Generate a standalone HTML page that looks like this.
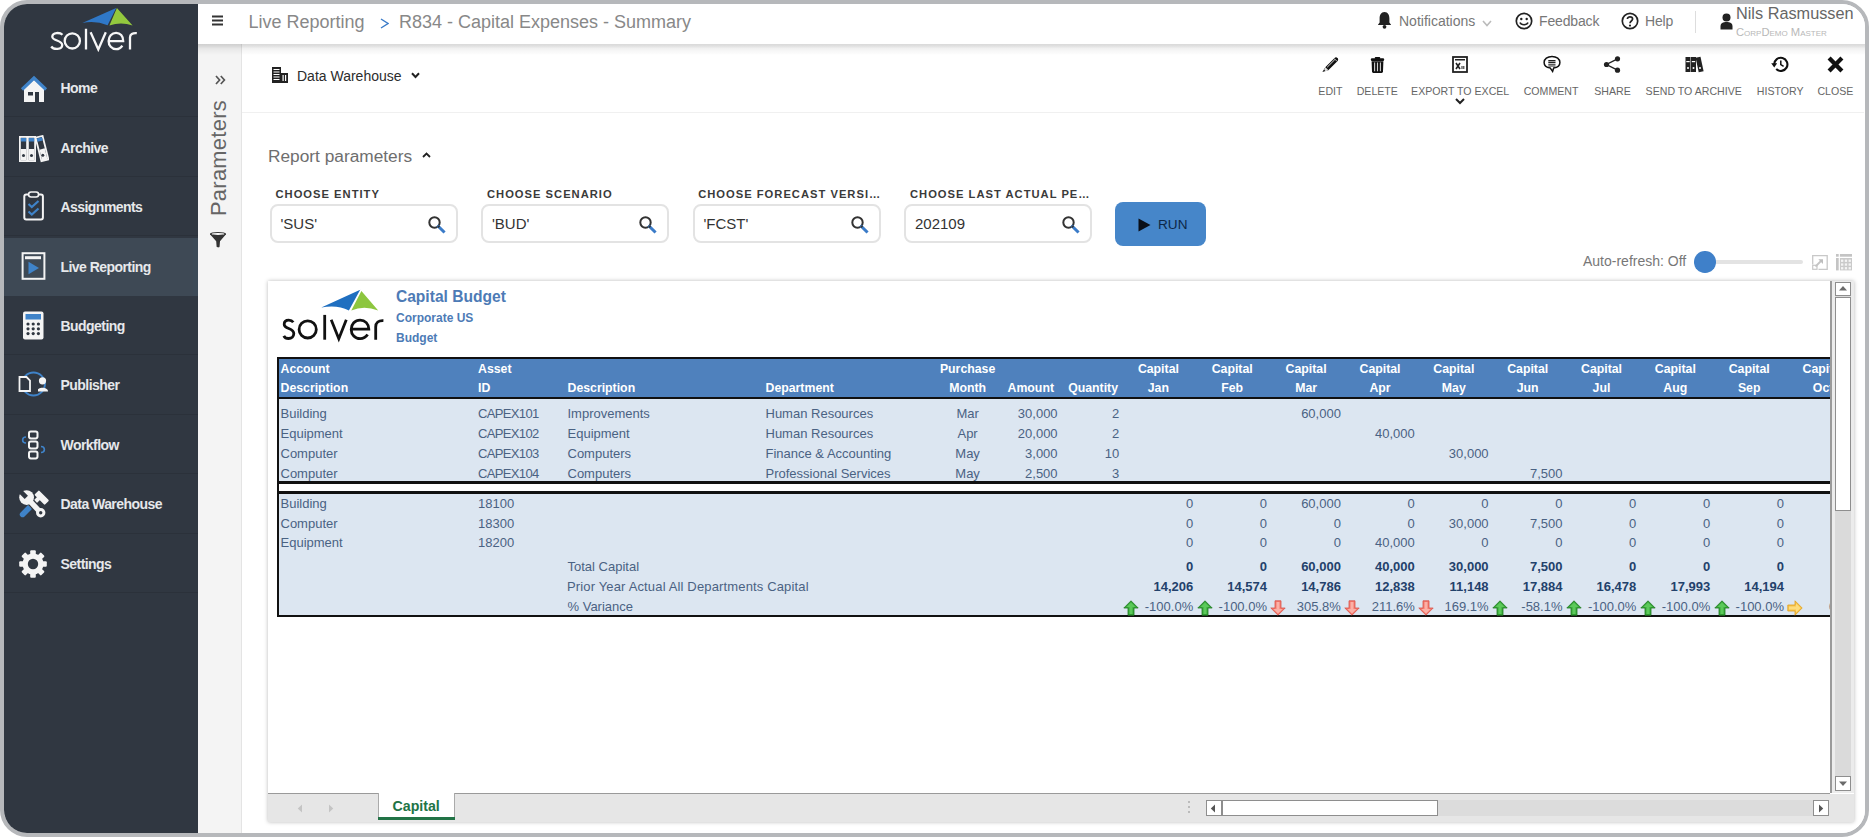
<!DOCTYPE html>
<html><head><meta charset="utf-8">
<style>
html,body{margin:0;padding:0;background:#fff;width:1869px;height:837px;overflow:hidden;font-family:"Liberation Sans",sans-serif;}
#frame{position:absolute;left:0;top:0;width:1869px;height:837px;box-sizing:border-box;border:4px solid #b6b8bb;border-radius:27px;overflow:hidden;background:#fff;}
#pg{position:absolute;left:-4px;top:-4px;width:1869px;height:837px;}
.a{position:absolute;white-space:nowrap;}
/* sidebar */
#sb{position:absolute;left:0;top:0;width:198px;height:837px;background:#303741;}
.item{position:absolute;left:0;width:198px;height:58.5px;border-bottom:1px solid #2b313a;}
.item .t{position:absolute;left:60.5px;top:21.7px;font-size:14px;font-weight:bold;color:#e6e8eb;letter-spacing:-0.55px;}
.item svg{position:absolute;left:17px;top:14px;}
#top{position:absolute;left:198px;top:0;width:1671px;height:44px;background:#fff;z-index:3;}
#tshadow{position:absolute;left:198px;top:44px;width:1671px;height:11px;z-index:4;background:linear-gradient(rgba(0,0,0,0.15),rgba(0,0,0,0.12) 18%,rgba(0,0,0,0.06) 40%,rgba(0,0,0,0.035) 60%,rgba(0,0,0,0.015) 85%,rgba(0,0,0,0));}
#par{position:absolute;left:198px;top:44px;width:43px;height:800px;background:#f4f4f4;border-right:1px solid #e4e4e4;}
#main{position:absolute;left:242px;top:44px;width:1627px;height:800px;background:#fff;}
.tb{position:absolute;top:85px;font-size:10.6px;color:#666;text-align:center;width:120px;margin-left:-60px;}
.lbl{position:absolute;top:188px;font-size:11.2px;font-weight:bold;color:#3a3a3a;letter-spacing:1px;}
.inp{position:absolute;top:204px;width:188px;height:39px;box-sizing:border-box;border:2px solid #e3e3e3;border-radius:8px;background:#fff;}
.inp .v{position:absolute;left:9px;top:8.6px;font-size:15px;color:#333;}
.inp svg{position:absolute;left:155px;top:9px;}
</style></head><body>
<div id="frame"><div id="pg">

<!-- SIDEBAR -->
<div id="sb">
  <svg class="a" style="left:40px;top:0px" width="110" height="60" viewBox="40 0 110 60">
    <path d="M82.3 22.9 L116.2 7.9 L107.6 25.2 Q96 20.5 82.3 22.9 Z" fill="#2f78c8"/>
    <path d="M116.9 7.9 L132.6 25.4 Q121 21.5 109.4 25.4 Z" fill="#93c83e"/>
    <g fill="none" stroke="#f6f6f6" stroke-width="2.3">
      <path d="M62.5 34.8 C60 32.3 52.5 32 52.3 36.6 C52.2 41.2 62.2 39.8 62.2 45 C62.2 50 53.5 49.8 51.2 46.5"/>
      <circle cx="72.3" cy="40.9" r="7.6"/>
      <line x1="86" y1="28.8" x2="86" y2="49.6"/>
      <path d="M90.6 32.3 L98.3 49.4 L105.8 32.3"/>
      <path d="M109.2 41.2 L123.2 41.2 C123.4 36 120 32.8 116.1 32.8 C111.8 32.8 108.6 36.5 108.6 41 C108.6 45.5 111.8 49.2 116.1 49.2 C119 49.2 121 47.8 122.3 45.6"/>
      <path d="M130 49.6 L130 37.5 C130 34.5 132.5 32.8 136.8 33.2"/>
    </g>
  </svg>
  <div class="item" style="top:57.9px;"><div class="t">Home</div></div>
  <div class="a" style="left:18.5px;top:75px;line-height:0"><svg width="30" height="30" viewBox="0 0 30 30"><path d="M5 14 L15 4.5 L25 14 L25 27 L5 27 Z" fill="#f4f4f4"/><path d="M3 14.5 L15 3 L27 14.5" fill="none" stroke="#3f83c9" stroke-width="3.2" stroke-linejoin="miter"/><rect x="9" y="17" width="5" height="3.5" fill="#303741"/><rect x="16" y="17" width="4" height="10" fill="#303741"/></svg></div>
  <div class="item" style="top:117.4px;"><div class="t" style="top:22.5px">Archive</div></div>
  <div class="a" style="left:17.3px;top:135.3px;line-height:0"><svg width="32" height="30" viewBox="0 0 32 30"><g stroke="#f4f4f4" stroke-width="1.8"><rect x="2.9" y="1.9" width="7.2" height="24.2" fill="#303741"/><rect x="10.9" y="1.9" width="7.2" height="24.2" fill="#303741"/><rect x="21.5" y="1.5" width="7.2" height="24.2" fill="#303741" transform="rotate(-14 25 14)"/></g><rect x="3.8" y="14" width="5.4" height="11.4" fill="#f4f4f4"/><rect x="11.8" y="14" width="5.4" height="11.4" fill="#f4f4f4"/><rect x="22.4" y="14" width="5.4" height="11.4" fill="#f4f4f4" transform="rotate(-14 25 14)"/><rect x="3.8" y="3" width="5.4" height="3.5" fill="#3f83c9"/><rect x="11.8" y="3" width="5.4" height="3.5" fill="#3f83c9"/><rect x="22.4" y="2.5" width="5.4" height="3.5" fill="#3f83c9" transform="rotate(-14 25 14)"/><circle cx="6.5" cy="20.5" r="1.5" fill="#303741"/><circle cx="14.5" cy="20.5" r="1.5" fill="#303741"/><circle cx="25.8" cy="20.2" r="1.5" fill="#303741"/></svg></div>
  <div class="item" style="top:176.9px;"><div class="t">Assignments</div></div>
  <div class="a" style="left:16.5px;top:189.5px;line-height:0"><svg width="30" height="32" viewBox="0 0 30 32"><rect x="7.3" y="4.5" width="18.6" height="25" rx="2" fill="none" stroke="#f4f4f4" stroke-width="2"/><rect x="11.6" y="2" width="10" height="5" rx="2.5" fill="#303741" stroke="#f4f4f4" stroke-width="1.6"/><path d="M11.5 14 L14.8 17 L21.5 11 M11.5 21.5 L14.8 24.5 L21.5 18.5" fill="none" stroke="#3f83c9" stroke-width="2.2"/></svg></div>
  <div class="a" style="left:0;top:238px;width:193px;height:58px;background:#3e4955;"></div><div class="a" style="left:193px;top:238px;width:5px;height:58px;background:#3d4a57;"></div><div class="item" style="top:236.4px;border-bottom:none;"><div class="t" style="top:23px">Live Reporting</div></div>
  <div class="a" style="left:17px;top:251px;line-height:0"><svg width="30" height="30" viewBox="0 0 30 30"><rect x="5.6" y="2.2" width="21.8" height="25.6" fill="none" stroke="#f4f4f4" stroke-width="2"/><rect x="8" y="5.2" width="16" height="3" fill="#f4f4f4"/><path d="M11.5 10.8 L22 17 L11.5 23.2 Z" fill="#3f83c9"/></svg></div>
  <div class="item" style="top:295.9px;"><div class="t">Budgeting</div></div>
  <div class="a" style="left:16px;top:309px;line-height:0"><svg width="30" height="32" viewBox="0 0 30 32"><rect x="7" y="2.5" width="20.5" height="28" rx="2" fill="#f4f4f4"/><rect x="9.5" y="5" width="15.5" height="5.5" fill="#3f83c9"/><g fill="#303741"><circle cx="12" cy="15" r="1.6"/><circle cx="17.2" cy="15" r="1.6"/><circle cx="22.4" cy="15" r="1.6"/><circle cx="12" cy="19.8" r="1.6"/><circle cx="17.2" cy="19.8" r="1.6"/><circle cx="22.4" cy="19.8" r="1.6"/><circle cx="12" cy="24.6" r="1.6"/><circle cx="17.2" cy="24.6" r="1.6"/><circle cx="22.4" cy="24.6" r="1.6"/></g></svg></div>
  <div class="item" style="top:355.4px;"><div class="t">Publisher</div></div>
  <div class="a" style="left:17px;top:368px;line-height:0"><svg width="34" height="32" viewBox="0 0 34 32"><circle cx="16.5" cy="16" r="11.5" fill="none" stroke="#3f83c9" stroke-width="1.8"/><path d="M2.5 9 L9.5 9 L13 12.5 L13 23 L2.5 23 Z" fill="#303741" stroke="#f4f4f4" stroke-width="1.8"/><circle cx="25.5" cy="12.8" r="3.6" fill="#f4f4f4"/><path d="M20 23.5 C20 18.5 31 18.5 31 23.5 Z" fill="#f4f4f4"/><rect x="18" y="16.5" width="3" height="8" fill="#303741"/></svg></div>
  <div class="item" style="top:414.9px;"><div class="t">Workflow</div></div>
  <div class="a" style="left:17.3px;top:429.3px;line-height:0"><svg width="34" height="32" viewBox="0 0 34 32"><g fill="none" stroke="#f4f4f4" stroke-width="2"><rect x="12" y="2.4" width="8.5" height="7" rx="1.8"/><rect x="12" y="12.4" width="8.5" height="7" rx="1.8"/><rect x="12" y="22.4" width="8.5" height="7" rx="1.8"/></g><g fill="none" stroke="#3f83c9" stroke-width="1.6"><path d="M9 8 C4.5 8 4.5 14 9 14"/><path d="M24 17.5 C28.5 17.5 28.5 23.5 24 23.5"/></g></svg></div>
  <div class="item" style="top:474.4px;"><div class="t">Data Warehouse</div></div>
  <div class="a" style="left:14px;top:486px;line-height:0"><svg width="38" height="36" viewBox="0 0 38 36"><line x1="8.6" y1="28.4" x2="16.5" y2="20.5" stroke="#3f83c9" stroke-width="5.6" stroke-linecap="round"/><line x1="16" y1="21" x2="26" y2="11" stroke="#f4f4f4" stroke-width="4"/><rect x="20.5" y="8.4" width="14.5" height="6.4" rx="1" transform="rotate(45 27.7 11.6)" fill="#f4f4f4"/><line x1="13" y1="12" x2="26.5" y2="26.5" stroke="#303741" stroke-width="8"/><line x1="13" y1="12" x2="26.5" y2="26.5" stroke="#f4f4f4" stroke-width="5.4" stroke-linecap="round"/><circle cx="26.7" cy="26.7" r="4.7" fill="#f4f4f4"/><circle cx="26.7" cy="26.7" r="1.7" fill="#303741"/><circle cx="12.6" cy="11.6" r="7.4" fill="#f4f4f4"/><rect x="10.3" y="1" width="4.6" height="10.2" transform="rotate(-45 12.6 11.6)" fill="#303741"/></svg></div>
  <div class="item" style="top:533.9px;"><div class="t">Settings</div></div>
  <div class="a" style="left:17.3px;top:547.5px;line-height:0"><svg width="32" height="32" viewBox="0 0 32 32"><g transform="translate(16 16)" fill="#f4f4f4"><circle r="10.5"/><g id="teeth"><rect x="-2.8" y="-13.8" width="5.6" height="6" rx="1"/><rect x="-2.8" y="-13.8" width="5.6" height="6" rx="1" transform="rotate(45)"/><rect x="-2.8" y="-13.8" width="5.6" height="6" rx="1" transform="rotate(90)"/><rect x="-2.8" y="-13.8" width="5.6" height="6" rx="1" transform="rotate(135)"/><rect x="-2.8" y="-13.8" width="5.6" height="6" rx="1" transform="rotate(180)"/><rect x="-2.8" y="-13.8" width="5.6" height="6" rx="1" transform="rotate(225)"/><rect x="-2.8" y="-13.8" width="5.6" height="6" rx="1" transform="rotate(270)"/><rect x="-2.8" y="-13.8" width="5.6" height="6" rx="1" transform="rotate(315)"/></g><circle r="5.2" fill="#303741"/></g></svg></div>
</div>

<!-- TOP BAR -->
<div id="top">
  <svg class="a" style="left:14px;top:15px" width="11" height="11" viewBox="0 0 11 11"><g stroke="#333" stroke-width="1.8"><line x1="0" y1="1.5" x2="11" y2="1.5"/><line x1="0" y1="5.5" x2="11" y2="5.5"/><line x1="0" y1="9.5" x2="11" y2="9.5"/></g></svg>
  <div class="a" style="left:50.5px;top:12px;font-size:18px;color:#888;">Live Reporting</div>
  <svg class="a" style="left:182px;top:18px" width="9" height="11" viewBox="0 0 9 11"><path d="M1 1 L8 5.5 L1 10" fill="none" stroke="#3a7bc8" stroke-width="1.4"/></svg>
  <div class="a" style="left:201px;top:12px;font-size:18px;color:#888;">R834 - Capital Expenses - Summary</div>
  <!-- right -->
  <svg class="a" style="left:1179px;top:11px" width="15" height="18" viewBox="0 0 15 18"><path d="M7.5 1 C4 1 2.6 4 2.6 7.5 L2.6 11.5 L0.8 14 L14.2 14 L12.4 11.5 L12.4 7.5 C12.4 4 11 1 7.5 1 Z" fill="#222"/><circle cx="7.5" cy="15.8" r="1.9" fill="#222"/></svg>
  <div class="a" style="left:1201px;top:13px;font-size:14px;color:#777;">Notifications</div>
  <svg class="a" style="left:1284px;top:20px" width="10" height="7" viewBox="0 0 10 7"><path d="M1 1 L5 5.5 L9 1" fill="none" stroke="#bbb" stroke-width="1.6"/></svg>
  <svg class="a" style="left:1317px;top:12px" width="18" height="18" viewBox="0 0 18 18"><circle cx="9" cy="9" r="7.7" fill="none" stroke="#222" stroke-width="1.7"/><circle cx="6.3" cy="7" r="1.2" fill="#222"/><circle cx="11.7" cy="7" r="1.2" fill="#222"/><path d="M5 10.5 C6.2 13.5 11.8 13.5 13 10.5" fill="none" stroke="#222" stroke-width="1.6"/></svg>
  <div class="a" style="left:1341px;top:13px;font-size:14px;color:#777;letter-spacing:-0.15px;">Feedback</div>
  <svg class="a" style="left:1423px;top:12px" width="18" height="18" viewBox="0 0 18 18"><circle cx="9" cy="9" r="7.7" fill="none" stroke="#222" stroke-width="1.7"/><path d="M6.4 7 C6.4 4.2 11.6 4.2 11.6 7 C11.6 9 9 9 9 11.2" fill="none" stroke="#222" stroke-width="1.7"/><circle cx="9" cy="13.6" r="1.1" fill="#222"/></svg>
  <div class="a" style="left:1447px;top:13px;font-size:14px;color:#777;letter-spacing:-0.2px;">Help</div>
  <div class="a" style="left:1497px;top:11px;width:1px;height:22px;background:#ddd;"></div>
  <svg class="a" style="left:1522px;top:13px" width="13" height="17" viewBox="0 0 13 17"><circle cx="6.5" cy="4.6" r="4" fill="#222"/><path d="M0.5 16.5 L0.5 13.5 C0.5 10 3 9 6.5 9 C10 9 12.5 10 12.5 13.5 L12.5 16.5 Z" fill="#222"/></svg>
  <div class="a" style="left:1538px;top:4px;font-size:16.3px;color:#666;">Nils Rasmussen</div>
  <div class="a" style="left:1538px;top:26px;font-size:11.2px;color:#b8b8b8;font-variant:small-caps;letter-spacing:0px;">CorpDemo Master</div>
</div>

<div id="tshadow"></div>
<!-- PARAMETERS STRIP -->
<div id="par">
  <svg class="a" style="left:17px;top:30.5px" width="11" height="11" viewBox="0 0 11 11"><path d="M1 1 L4.6 5 L1 9 M5.8 1 L9.4 5 L5.8 9" fill="none" stroke="#555" stroke-width="1.7"/></svg>
  <div class="a" style="left:8.5px;top:171.5px;font-size:21.8px;color:#666;transform-origin:0 0;transform:rotate(-90deg);letter-spacing:0.33px;line-height:24px;">Parameters</div>
  <svg class="a" style="left:11px;top:187px" width="18" height="18" viewBox="0 0 18 18"><path d="M0.8 3 L17.2 3 L11 10.2 L10.6 15.6 C10.4 16.8 7.8 16.8 7.6 15.6 L7.2 10.2 Z" fill="#333"/><ellipse cx="9" cy="3" rx="8.2" ry="2" fill="#333"/><ellipse cx="9" cy="2.9" rx="6.4" ry="1" fill="#fafafa"/></svg>
</div>

<!-- MAIN -->
<div id="main"></div>
<div class="a" style="left:242px;top:112px;width:1622px;height:1px;background:#f0f0f0;"></div>
<!-- data warehouse dropdown -->
<svg class="a" style="left:272px;top:67px" width="16" height="16" viewBox="0 0 16 16"><g fill="#222"><rect x="0" y="0" width="9" height="16"/><rect x="9" y="6" width="7" height="10"/></g><g fill="#fff"><rect x="1.5" y="2" width="6" height="1"/><rect x="1.5" y="4.5" width="6" height="1"/><rect x="1.5" y="7" width="6" height="1"/><rect x="1.5" y="9.5" width="6" height="1"/><rect x="1.5" y="12" width="6" height="1"/><rect x="10.5" y="8" width="1.2" height="6"/><rect x="13" y="8" width="1.2" height="6"/></g></svg>
<div class="a" style="left:297px;top:67.5px;font-size:14px;color:#2c2c2c;">Data Warehouse</div>
<svg class="a" style="left:411px;top:72px" width="9" height="7" viewBox="0 0 9 7"><path d="M1 1.2 L4.5 5 L8 1.2" fill="none" stroke="#222" stroke-width="2"/></svg>

<!-- toolbar -->
<div class="tb" style="left:1330.4px">EDIT</div>
<div class="tb" style="left:1377.3px">DELETE</div>
<div class="tb" style="left:1460.2px">EXPORT TO EXCEL</div>
<div class="tb" style="left:1551.1px">COMMENT</div>
<div class="tb" style="left:1612.5px">SHARE</div>
<div class="tb" style="left:1693.7px">SEND TO ARCHIVE</div>
<div class="tb" style="left:1780.2px">HISTORY</div>
<div class="tb" style="left:1835.4px">CLOSE</div>
<!-- pencil -->
<svg class="a" style="left:1320px;top:55px" width="20" height="19" viewBox="0 0 20 19"><path d="M5.3 12.2 L14.6 2.9 C15.4 2.1 16.6 2.1 17.4 2.9 L17.6 3.1 C18.4 3.9 18.4 5.1 17.6 5.9 L8.3 15.2 Z" fill="#111"/><path d="M5.3 12.2 L8.3 15.2 L2.4 17 Z" fill="#111"/><path d="M4.2 14.8 L5.3 12.2 L8.3 15.2 L5.7 16.2 Z" fill="#ddd"/><path d="M7.2 12.2 L14.8 4.6" stroke="#eee" stroke-width="0.9"/><path d="M14.3 3.6 L17 6.3" stroke="#eee" stroke-width="0.8"/></svg>
<!-- trash -->
<svg class="a" style="left:1370px;top:56px" width="15" height="18" viewBox="0 0 15 18"><rect x="0.8" y="2.3" width="13.4" height="2.6" rx="1.2" fill="#111"/><rect x="4.8" y="1" width="5.4" height="2" rx="0.8" fill="#111"/><path d="M1.6 5.2 L13.4 5.2 L13 15.6 C13 16.4 12.4 16.9 11.6 16.9 L3.4 16.9 C2.6 16.9 2 16.4 2 15.6 Z" fill="#111"/><g stroke="#cfcfcf" stroke-width="1.1"><line x1="4.6" y1="6.6" x2="4.6" y2="15.2"/><line x1="7.5" y1="6.6" x2="7.5" y2="15.2"/><line x1="10.4" y1="6.6" x2="10.4" y2="15.2"/></g></svg>
<!-- excel -->
<svg class="a" style="left:1452px;top:56px" width="16" height="17" viewBox="0 0 16 17"><rect x="1" y="1" width="14" height="15" fill="none" stroke="#222" stroke-width="1.8"/><rect x="3" y="3" width="10" height="1.5" fill="#222"/><path d="M4 7 L8 13 M8 7 L4 13" stroke="#222" stroke-width="1.6"/><rect x="9.5" y="10" width="1" height="3" fill="#222"/><rect x="11.3" y="10" width="1" height="3" fill="#222"/></svg>
<svg class="a" style="left:1455px;top:98px" width="10" height="7" viewBox="0 0 10 7"><path d="M1 1 L5 5 L9 1" fill="none" stroke="#222" stroke-width="2"/></svg>
<!-- comment -->
<svg class="a" style="left:1542px;top:55px" width="20" height="18" viewBox="0 0 20 18"><path d="M10 1.4 C5.4 1.4 2.1 4.1 2.1 7.4 C2.1 10.3 4.6 12.5 8.3 13.1 L10.6 16.4 L11.7 13 C15.4 12.4 17.9 10.2 17.9 7.4 C17.9 4.1 14.6 1.4 10 1.4 Z" fill="none" stroke="#111" stroke-width="1.5"/><g stroke="#222" stroke-width="1.15"><line x1="6.3" y1="5.6" x2="13.5" y2="5.6"/><line x1="6.3" y1="7.4" x2="13.5" y2="7.4"/><line x1="6.3" y1="9.2" x2="13.5" y2="9.2"/><line x1="6.3" y1="11" x2="13.5" y2="11"/></g></svg>
<!-- share -->
<svg class="a" style="left:1603px;top:56px" width="18" height="17" viewBox="0 0 18 17"><g fill="#222"><circle cx="14.5" cy="2.8" r="2.6"/><circle cx="3.5" cy="8.5" r="2.6"/><circle cx="14.5" cy="14.2" r="2.6"/></g><path d="M14.5 2.8 L3.5 8.5 L14.5 14.2" fill="none" stroke="#222" stroke-width="1.4"/></svg>
<!-- archive -->
<svg class="a" style="left:1685px;top:56px" width="19" height="17" viewBox="0 0 19 17"><g fill="#222"><rect x="0.5" y="1" width="5" height="15"/><rect x="6" y="1" width="5" height="15"/><rect x="12" y="1" width="5" height="15" transform="rotate(-12 14.5 8)"/></g><g fill="#fff"><rect x="1.3" y="5" width="3.4" height="1.2"/><rect x="6.8" y="5" width="3.4" height="1.2"/><circle cx="3" cy="12" r="1"/><circle cx="8.5" cy="12" r="1"/><circle cx="15" cy="12" r="1"/></g></svg>
<!-- history -->
<svg class="a" style="left:1771px;top:56px" width="20" height="17" viewBox="0 0 20 17"><path d="M3.2 8.3 A6.6 6.6 0 1 1 5.2 13.1" fill="none" stroke="#111" stroke-width="2.1"/><path d="M0.2 7.2 L6.2 7.2 L3.2 11.4 Z" fill="#111"/><path d="M9.8 4.6 L9.8 8.6 L12.6 10.4" fill="none" stroke="#111" stroke-width="1.5"/></svg>
<!-- close -->
<svg class="a" style="left:1827px;top:56px" width="17" height="17" viewBox="0 0 17 17"><path d="M3.6 3.6 L13.4 13.4 M13.4 3.6 L3.6 13.4" stroke="#111" stroke-width="4.3" stroke-linecap="square"/></svg>

<!-- report parameters -->
<div class="a" style="left:268px;top:146px;font-size:17.3px;color:#6e6e6e;">Report parameters</div>
<svg class="a" style="left:422px;top:152px" width="9" height="6" viewBox="0 0 9 6"><path d="M1 5 L4.5 1.5 L8 5" fill="none" stroke="#222" stroke-width="1.8"/></svg>

<div class="lbl" style="left:275.5px">CHOOSE ENTITY</div>
<div class="lbl" style="left:487px">CHOOSE SCENARIO</div>
<div class="lbl" style="left:698.2px">CHOOSE FORECAST VERSI&#8230;</div>
<div class="lbl" style="left:910px">CHOOSE LAST ACTUAL PE&#8230;</div>
<div class="inp" style="left:269.5px"><div class="v">&#39;SUS&#39;</div><svg width="20" height="20" viewBox="0 0 20 20"><circle cx="7.5" cy="7.5" r="5.2" fill="none" stroke="#333" stroke-width="2"/><path d="M11.5 11.5 L16.5 16.5" stroke="#3a7bc8" stroke-width="3" stroke-linecap="square"/><path d="M11 11 L12.3 12.3" stroke="#333" stroke-width="2.2"/></svg></div>
<div class="inp" style="left:481px"><div class="v">&#39;BUD&#39;</div><svg width="20" height="20" viewBox="0 0 20 20"><circle cx="7.5" cy="7.5" r="5.2" fill="none" stroke="#333" stroke-width="2"/><path d="M11.5 11.5 L16.5 16.5" stroke="#3a7bc8" stroke-width="3" stroke-linecap="square"/><path d="M11 11 L12.3 12.3" stroke="#333" stroke-width="2.2"/></svg></div>
<div class="inp" style="left:692.5px"><div class="v">&#39;FCST&#39;</div><svg width="20" height="20" viewBox="0 0 20 20"><circle cx="7.5" cy="7.5" r="5.2" fill="none" stroke="#333" stroke-width="2"/><path d="M11.5 11.5 L16.5 16.5" stroke="#3a7bc8" stroke-width="3" stroke-linecap="square"/><path d="M11 11 L12.3 12.3" stroke="#333" stroke-width="2.2"/></svg></div>
<div class="inp" style="left:904px"><div class="v">202109</div><svg width="20" height="20" viewBox="0 0 20 20"><circle cx="7.5" cy="7.5" r="5.2" fill="none" stroke="#333" stroke-width="2"/><path d="M11.5 11.5 L16.5 16.5" stroke="#3a7bc8" stroke-width="3" stroke-linecap="square"/><path d="M11 11 L12.3 12.3" stroke="#333" stroke-width="2.2"/></svg></div>

<!-- run -->
<div class="a" style="left:1115px;top:202px;width:91px;height:44px;background:#4686c9;border-radius:8px;"></div>
<svg class="a" style="left:1138px;top:218px" width="13" height="14" viewBox="0 0 13 14"><path d="M0.5 0.5 L12.5 7 L0.5 13.5 Z" fill="#0a0f18"/></svg>
<div class="a" style="left:1158px;top:216.5px;font-size:13.6px;color:#0d2848;">RUN</div>

<!-- auto refresh -->
<div class="a" style="left:1583px;top:253px;font-size:14px;color:#777;">Auto-refresh: Off</div>
<div class="a" style="left:1712px;top:260px;width:91px;height:4px;background:#e3e3e3;border-radius:2px;"></div>
<div class="a" style="left:1694px;top:251px;width:21.5px;height:21.5px;background:#3f80c9;border-radius:50%;"></div>
<svg class="a" style="left:1812px;top:255px" width="16" height="15" viewBox="0 0 16 15"><path d="M0.7 9.5 L0.7 0.7 L15.2 0.7 L15.2 14.3 L6.5 14.3" fill="none" stroke="#c8c8c8" stroke-width="1.3"/><rect x="0.7" y="10.3" width="4.3" height="4" fill="none" stroke="#c8c8c8" stroke-width="1.2"/><path d="M3.5 11.5 L9 6" stroke="#c4c4c4" stroke-width="1.8"/><path d="M6.3 4.3 L11 4.3 L11 9 Z" fill="#bdbdbd"/></svg>
<svg class="a" style="left:1836px;top:254px" width="16" height="17" viewBox="0 0 16 17"><g fill="#c4c4c4"><rect x="0" y="0" width="2.7" height="2.7"/><rect x="3.9" y="0" width="12.1" height="2.7"/><rect x="0" y="4" width="2.7" height="12.4"/><rect x="3.9" y="4" width="12.1" height="12.4" fill="#cacaca"/></g><g fill="#f4f4f4"><rect x="5" y="5.6" width="2.3" height="2.3"/><rect x="8.8" y="5.6" width="2.3" height="2.3"/><rect x="12.6" y="5.6" width="2.3" height="2.3"/><rect x="5" y="9.4" width="2.3" height="2.3"/><rect x="8.8" y="9.4" width="2.3" height="2.3"/><rect x="12.6" y="9.4" width="2.3" height="2.3"/><rect x="5" y="13.1" width="2.3" height="2.3"/><rect x="8.8" y="13.1" width="2.3" height="2.3"/><rect x="12.6" y="13.1" width="2.3" height="2.3"/></g></svg>

<!-- SHEET -->
<div class="a" style="left:268px;top:281px;width:1586px;height:541px;background:#fff;box-shadow:0 0 4px rgba(0,0,0,0.28);"></div>
<div class="a" style="left:268px;top:281px;width:1562px;height:512px;overflow:hidden;">
<div class="a" style="left:-268px;top:-281px;width:1869px;height:837px;">
<svg class="a" style="left:0;top:0" width="400" height="350" viewBox="0 0 400 350">
<path d="M321.3 307.6 L360.2 289.7 L348.9 310.4 Q337 304.5 321.3 307.6 Z" fill="#1f6fc0"/>
<path d="M361.4 291 L378.2 310.4 Q364 305 351.3 310.4 Z" fill="#8dc63f"/>
<g fill="none" stroke="#111" stroke-width="2.8">
<path d="M293.3 322.3 C292 320.5 290.5 320.1 288.8 320.1 C286 320.1 284.2 321.8 284.2 324.2 C284.2 329.5 293.8 327.5 293.8 333.6 C293.8 336.6 291.5 338.5 288.6 338.5 C286.3 338.5 284.5 337.3 283.8 335.8"/>
<circle cx="307.7" cy="329.4" r="8.6"/>
<line x1="324.7" y1="314.9" x2="324.7" y2="339.7"/>
<path d="M331.2 319.8 L338.8 338.7 L346.3 319.8"/>
<path d="M351.3 329.1 L368.8 329.1 C368.8 323.8 365 320.1 360.1 320.1 C355 320.1 351.2 324.2 351.2 329.4 C351.2 334.6 355 338.6 360.1 338.6 C363.5 338.6 366 337 367.6 334.5"/>
<path d="M375.7 339.7 L375.7 327 C375.7 322.5 378.5 320.3 383.4 320.6"/>
</g></svg>
<div class="a" style="left:395.9px;top:289.3px;font-size:15.6px;line-height:15.6px;font-weight:bold;color:#4d7bb6;">Capital Budget</div>
<div class="a" style="left:396.0px;top:311.6px;font-size:12px;line-height:12px;font-weight:bold;color:#4d7bb6;">Corporate US</div>
<div class="a" style="left:396.0px;top:331.7px;font-size:12px;line-height:12px;font-weight:bold;color:#4d7bb6;">Budget</div>
<div class="a" style="left:277px;top:357px;width:1623px;height:2px;background:#111;"></div>
<div class="a" style="left:277px;top:359px;width:1623px;height:38px;background:#4f81bd;"></div>
<div class="a" style="left:277px;top:397px;width:1623px;height:2px;background:#111;"></div>
<div class="a" style="left:277px;top:399px;width:1623px;height:82px;background:#dce6f1;"></div>
<div class="a" style="left:277px;top:481px;width:1623px;height:2.5px;background:#111;"></div>
<div class="a" style="left:277px;top:491px;width:1623px;height:2.5px;background:#111;"></div>
<div class="a" style="left:277px;top:493.5px;width:1623px;height:121px;background:#dce6f1;"></div>
<div class="a" style="left:277px;top:614.5px;width:1623px;height:2.5px;background:#111;"></div>
<div class="a" style="left:277px;top:357px;width:2px;height:260px;background:#111;"></div>
<div class="a" style="left:280.5px;top:362.7px;font-size:12.3px;line-height:12.3px;font-weight:bold;color:#ffffff;">Account</div>
<div class="a" style="left:280.5px;top:382.3px;font-size:12.3px;line-height:12.3px;font-weight:bold;color:#ffffff;">Description</div>
<div class="a" style="left:478.0px;top:362.7px;font-size:12.3px;line-height:12.3px;font-weight:bold;color:#ffffff;">Asset</div>
<div class="a" style="left:478.0px;top:382.3px;font-size:12.3px;line-height:12.3px;font-weight:bold;color:#ffffff;">ID</div>
<div class="a" style="left:567.5px;top:382.3px;font-size:12.3px;line-height:12.3px;font-weight:bold;color:#ffffff;">Description</div>
<div class="a" style="left:765.5px;top:382.3px;font-size:12.3px;line-height:12.3px;font-weight:bold;color:#ffffff;">Department</div>
<div class="a" style="left:767.6px;width:400px;text-align:center;top:362.7px;font-size:12.3px;line-height:12.3px;font-weight:bold;color:#ffffff;">Purchase</div>
<div class="a" style="left:767.6px;width:400px;text-align:center;top:382.3px;font-size:12.3px;line-height:12.3px;font-weight:bold;color:#ffffff;">Month</div>
<div class="a" style="left:654.0px;width:400px;text-align:right;top:382.3px;font-size:12.3px;line-height:12.3px;font-weight:bold;color:#ffffff;">Amount</div>
<div class="a" style="left:718.0px;width:400px;text-align:right;top:382.3px;font-size:12.3px;line-height:12.3px;font-weight:bold;color:#ffffff;">Quantity</div>
<div class="a" style="left:958.4px;width:400px;text-align:center;top:362.7px;font-size:12.3px;line-height:12.3px;font-weight:bold;color:#ffffff;">Capital</div>
<div class="a" style="left:958.4px;width:400px;text-align:center;top:382.3px;font-size:12.3px;line-height:12.3px;font-weight:bold;color:#ffffff;">Jan</div>
<div class="a" style="left:1032.2px;width:400px;text-align:center;top:362.7px;font-size:12.3px;line-height:12.3px;font-weight:bold;color:#ffffff;">Capital</div>
<div class="a" style="left:1032.2px;width:400px;text-align:center;top:382.3px;font-size:12.3px;line-height:12.3px;font-weight:bold;color:#ffffff;">Feb</div>
<div class="a" style="left:1106.1px;width:400px;text-align:center;top:362.7px;font-size:12.3px;line-height:12.3px;font-weight:bold;color:#ffffff;">Capital</div>
<div class="a" style="left:1106.1px;width:400px;text-align:center;top:382.3px;font-size:12.3px;line-height:12.3px;font-weight:bold;color:#ffffff;">Mar</div>
<div class="a" style="left:1180.0px;width:400px;text-align:center;top:362.7px;font-size:12.3px;line-height:12.3px;font-weight:bold;color:#ffffff;">Capital</div>
<div class="a" style="left:1180.0px;width:400px;text-align:center;top:382.3px;font-size:12.3px;line-height:12.3px;font-weight:bold;color:#ffffff;">Apr</div>
<div class="a" style="left:1253.8px;width:400px;text-align:center;top:362.7px;font-size:12.3px;line-height:12.3px;font-weight:bold;color:#ffffff;">Capital</div>
<div class="a" style="left:1253.8px;width:400px;text-align:center;top:382.3px;font-size:12.3px;line-height:12.3px;font-weight:bold;color:#ffffff;">May</div>
<div class="a" style="left:1327.7px;width:400px;text-align:center;top:362.7px;font-size:12.3px;line-height:12.3px;font-weight:bold;color:#ffffff;">Capital</div>
<div class="a" style="left:1327.7px;width:400px;text-align:center;top:382.3px;font-size:12.3px;line-height:12.3px;font-weight:bold;color:#ffffff;">Jun</div>
<div class="a" style="left:1401.5px;width:400px;text-align:center;top:362.7px;font-size:12.3px;line-height:12.3px;font-weight:bold;color:#ffffff;">Capital</div>
<div class="a" style="left:1401.5px;width:400px;text-align:center;top:382.3px;font-size:12.3px;line-height:12.3px;font-weight:bold;color:#ffffff;">Jul</div>
<div class="a" style="left:1475.3px;width:400px;text-align:center;top:362.7px;font-size:12.3px;line-height:12.3px;font-weight:bold;color:#ffffff;">Capital</div>
<div class="a" style="left:1475.3px;width:400px;text-align:center;top:382.3px;font-size:12.3px;line-height:12.3px;font-weight:bold;color:#ffffff;">Aug</div>
<div class="a" style="left:1549.2px;width:400px;text-align:center;top:362.7px;font-size:12.3px;line-height:12.3px;font-weight:bold;color:#ffffff;">Capital</div>
<div class="a" style="left:1549.2px;width:400px;text-align:center;top:382.3px;font-size:12.3px;line-height:12.3px;font-weight:bold;color:#ffffff;">Sep</div>
<div class="a" style="left:1623.1px;width:400px;text-align:center;top:362.7px;font-size:12.3px;line-height:12.3px;font-weight:bold;color:#ffffff;">Capital</div>
<div class="a" style="left:1623.1px;width:400px;text-align:center;top:382.3px;font-size:12.3px;line-height:12.3px;font-weight:bold;color:#ffffff;">Oct</div>
<div class="a" style="left:280.5px;top:407.4px;font-size:13px;line-height:13px;font-weight:normal;color:#4a6283;">Building</div>
<div class="a" style="left:478.0px;top:407.4px;font-size:13px;line-height:13px;font-weight:normal;color:#4a6283;letter-spacing:-0.65px;">CAPEX101</div>
<div class="a" style="left:567.5px;top:407.4px;font-size:13px;line-height:13px;font-weight:normal;color:#4a6283;">Improvements</div>
<div class="a" style="left:765.5px;top:407.4px;font-size:13px;line-height:13px;font-weight:normal;color:#4a6283;">Human Resources</div>
<div class="a" style="left:767.6px;width:400px;text-align:center;top:407.4px;font-size:13px;line-height:13px;font-weight:normal;color:#4a6283;">Mar</div>
<div class="a" style="left:657.6px;width:400px;text-align:right;top:407.4px;font-size:13px;line-height:13px;font-weight:normal;color:#4a6283;">30,000</div>
<div class="a" style="left:719.2px;width:400px;text-align:right;top:407.4px;font-size:13px;line-height:13px;font-weight:normal;color:#4a6283;">2</div>
<div class="a" style="left:940.9px;width:400px;text-align:right;top:407.4px;font-size:13px;line-height:13px;font-weight:normal;color:#4a6283;">60,000</div>
<div class="a" style="left:280.5px;top:427.1px;font-size:13px;line-height:13px;font-weight:normal;color:#4a6283;">Equipment</div>
<div class="a" style="left:478.0px;top:427.1px;font-size:13px;line-height:13px;font-weight:normal;color:#4a6283;letter-spacing:-0.65px;">CAPEX102</div>
<div class="a" style="left:567.5px;top:427.1px;font-size:13px;line-height:13px;font-weight:normal;color:#4a6283;">Equipment</div>
<div class="a" style="left:765.5px;top:427.1px;font-size:13px;line-height:13px;font-weight:normal;color:#4a6283;">Human Resources</div>
<div class="a" style="left:767.6px;width:400px;text-align:center;top:427.1px;font-size:13px;line-height:13px;font-weight:normal;color:#4a6283;">Apr</div>
<div class="a" style="left:657.6px;width:400px;text-align:right;top:427.1px;font-size:13px;line-height:13px;font-weight:normal;color:#4a6283;">20,000</div>
<div class="a" style="left:719.2px;width:400px;text-align:right;top:427.1px;font-size:13px;line-height:13px;font-weight:normal;color:#4a6283;">2</div>
<div class="a" style="left:1014.8px;width:400px;text-align:right;top:427.1px;font-size:13px;line-height:13px;font-weight:normal;color:#4a6283;">40,000</div>
<div class="a" style="left:280.5px;top:446.8px;font-size:13px;line-height:13px;font-weight:normal;color:#4a6283;">Computer</div>
<div class="a" style="left:478.0px;top:446.8px;font-size:13px;line-height:13px;font-weight:normal;color:#4a6283;letter-spacing:-0.65px;">CAPEX103</div>
<div class="a" style="left:567.5px;top:446.8px;font-size:13px;line-height:13px;font-weight:normal;color:#4a6283;">Computers</div>
<div class="a" style="left:765.5px;top:446.8px;font-size:13px;line-height:13px;font-weight:normal;color:#4a6283;">Finance &amp; Accounting</div>
<div class="a" style="left:767.6px;width:400px;text-align:center;top:446.8px;font-size:13px;line-height:13px;font-weight:normal;color:#4a6283;">May</div>
<div class="a" style="left:657.6px;width:400px;text-align:right;top:446.8px;font-size:13px;line-height:13px;font-weight:normal;color:#4a6283;">3,000</div>
<div class="a" style="left:719.2px;width:400px;text-align:right;top:446.8px;font-size:13px;line-height:13px;font-weight:normal;color:#4a6283;">10</div>
<div class="a" style="left:1088.6px;width:400px;text-align:right;top:446.8px;font-size:13px;line-height:13px;font-weight:normal;color:#4a6283;">30,000</div>
<div class="a" style="left:280.5px;top:466.6px;font-size:13px;line-height:13px;font-weight:normal;color:#4a6283;">Computer</div>
<div class="a" style="left:478.0px;top:466.6px;font-size:13px;line-height:13px;font-weight:normal;color:#4a6283;letter-spacing:-0.65px;">CAPEX104</div>
<div class="a" style="left:567.5px;top:466.6px;font-size:13px;line-height:13px;font-weight:normal;color:#4a6283;">Computers</div>
<div class="a" style="left:765.5px;top:466.6px;font-size:13px;line-height:13px;font-weight:normal;color:#4a6283;">Professional Services</div>
<div class="a" style="left:767.6px;width:400px;text-align:center;top:466.6px;font-size:13px;line-height:13px;font-weight:normal;color:#4a6283;">May</div>
<div class="a" style="left:657.6px;width:400px;text-align:right;top:466.6px;font-size:13px;line-height:13px;font-weight:normal;color:#4a6283;">2,500</div>
<div class="a" style="left:719.2px;width:400px;text-align:right;top:466.6px;font-size:13px;line-height:13px;font-weight:normal;color:#4a6283;">3</div>
<div class="a" style="left:1162.5px;width:400px;text-align:right;top:466.6px;font-size:13px;line-height:13px;font-weight:normal;color:#4a6283;">7,500</div>
<div class="a" style="left:280.5px;top:496.8px;font-size:13px;line-height:13px;font-weight:normal;color:#4a6283;">Building</div>
<div class="a" style="left:478.0px;top:496.8px;font-size:13px;line-height:13px;font-weight:normal;color:#4a6283;">18100</div>
<div class="a" style="left:793.2px;width:400px;text-align:right;top:496.8px;font-size:13px;line-height:13px;font-weight:normal;color:#4a6283;">0</div>
<div class="a" style="left:867.0px;width:400px;text-align:right;top:496.8px;font-size:13px;line-height:13px;font-weight:normal;color:#4a6283;">0</div>
<div class="a" style="left:940.9px;width:400px;text-align:right;top:496.8px;font-size:13px;line-height:13px;font-weight:normal;color:#4a6283;">60,000</div>
<div class="a" style="left:1014.8px;width:400px;text-align:right;top:496.8px;font-size:13px;line-height:13px;font-weight:normal;color:#4a6283;">0</div>
<div class="a" style="left:1088.6px;width:400px;text-align:right;top:496.8px;font-size:13px;line-height:13px;font-weight:normal;color:#4a6283;">0</div>
<div class="a" style="left:1162.5px;width:400px;text-align:right;top:496.8px;font-size:13px;line-height:13px;font-weight:normal;color:#4a6283;">0</div>
<div class="a" style="left:1236.3px;width:400px;text-align:right;top:496.8px;font-size:13px;line-height:13px;font-weight:normal;color:#4a6283;">0</div>
<div class="a" style="left:1310.2px;width:400px;text-align:right;top:496.8px;font-size:13px;line-height:13px;font-weight:normal;color:#4a6283;">0</div>
<div class="a" style="left:1384.0px;width:400px;text-align:right;top:496.8px;font-size:13px;line-height:13px;font-weight:normal;color:#4a6283;">0</div>
<div class="a" style="left:1457.8px;width:400px;text-align:right;top:496.8px;font-size:13px;line-height:13px;font-weight:normal;color:#4a6283;">0</div>
<div class="a" style="left:280.5px;top:516.5px;font-size:13px;line-height:13px;font-weight:normal;color:#4a6283;">Computer</div>
<div class="a" style="left:478.0px;top:516.5px;font-size:13px;line-height:13px;font-weight:normal;color:#4a6283;">18300</div>
<div class="a" style="left:793.2px;width:400px;text-align:right;top:516.5px;font-size:13px;line-height:13px;font-weight:normal;color:#4a6283;">0</div>
<div class="a" style="left:867.0px;width:400px;text-align:right;top:516.5px;font-size:13px;line-height:13px;font-weight:normal;color:#4a6283;">0</div>
<div class="a" style="left:940.9px;width:400px;text-align:right;top:516.5px;font-size:13px;line-height:13px;font-weight:normal;color:#4a6283;">0</div>
<div class="a" style="left:1014.8px;width:400px;text-align:right;top:516.5px;font-size:13px;line-height:13px;font-weight:normal;color:#4a6283;">0</div>
<div class="a" style="left:1088.6px;width:400px;text-align:right;top:516.5px;font-size:13px;line-height:13px;font-weight:normal;color:#4a6283;">30,000</div>
<div class="a" style="left:1162.5px;width:400px;text-align:right;top:516.5px;font-size:13px;line-height:13px;font-weight:normal;color:#4a6283;">7,500</div>
<div class="a" style="left:1236.3px;width:400px;text-align:right;top:516.5px;font-size:13px;line-height:13px;font-weight:normal;color:#4a6283;">0</div>
<div class="a" style="left:1310.2px;width:400px;text-align:right;top:516.5px;font-size:13px;line-height:13px;font-weight:normal;color:#4a6283;">0</div>
<div class="a" style="left:1384.0px;width:400px;text-align:right;top:516.5px;font-size:13px;line-height:13px;font-weight:normal;color:#4a6283;">0</div>
<div class="a" style="left:1457.8px;width:400px;text-align:right;top:516.5px;font-size:13px;line-height:13px;font-weight:normal;color:#4a6283;">0</div>
<div class="a" style="left:280.5px;top:536.2px;font-size:13px;line-height:13px;font-weight:normal;color:#4a6283;">Equipment</div>
<div class="a" style="left:478.0px;top:536.2px;font-size:13px;line-height:13px;font-weight:normal;color:#4a6283;">18200</div>
<div class="a" style="left:793.2px;width:400px;text-align:right;top:536.2px;font-size:13px;line-height:13px;font-weight:normal;color:#4a6283;">0</div>
<div class="a" style="left:867.0px;width:400px;text-align:right;top:536.2px;font-size:13px;line-height:13px;font-weight:normal;color:#4a6283;">0</div>
<div class="a" style="left:940.9px;width:400px;text-align:right;top:536.2px;font-size:13px;line-height:13px;font-weight:normal;color:#4a6283;">0</div>
<div class="a" style="left:1014.8px;width:400px;text-align:right;top:536.2px;font-size:13px;line-height:13px;font-weight:normal;color:#4a6283;">40,000</div>
<div class="a" style="left:1088.6px;width:400px;text-align:right;top:536.2px;font-size:13px;line-height:13px;font-weight:normal;color:#4a6283;">0</div>
<div class="a" style="left:1162.5px;width:400px;text-align:right;top:536.2px;font-size:13px;line-height:13px;font-weight:normal;color:#4a6283;">0</div>
<div class="a" style="left:1236.3px;width:400px;text-align:right;top:536.2px;font-size:13px;line-height:13px;font-weight:normal;color:#4a6283;">0</div>
<div class="a" style="left:1310.2px;width:400px;text-align:right;top:536.2px;font-size:13px;line-height:13px;font-weight:normal;color:#4a6283;">0</div>
<div class="a" style="left:1384.0px;width:400px;text-align:right;top:536.2px;font-size:13px;line-height:13px;font-weight:normal;color:#4a6283;">0</div>
<div class="a" style="left:1457.8px;width:400px;text-align:right;top:536.2px;font-size:13px;line-height:13px;font-weight:normal;color:#4a6283;">0</div>
<div class="a" style="left:567.5px;top:560.2px;font-size:13px;line-height:13px;font-weight:normal;color:#4a6283;">Total Capital</div>
<div class="a" style="left:793.2px;width:400px;text-align:right;top:560.2px;font-size:13px;line-height:13px;font-weight:bold;color:#23416b;">0</div>
<div class="a" style="left:867.0px;width:400px;text-align:right;top:560.2px;font-size:13px;line-height:13px;font-weight:bold;color:#23416b;">0</div>
<div class="a" style="left:940.9px;width:400px;text-align:right;top:560.2px;font-size:13px;line-height:13px;font-weight:bold;color:#23416b;">60,000</div>
<div class="a" style="left:1014.8px;width:400px;text-align:right;top:560.2px;font-size:13px;line-height:13px;font-weight:bold;color:#23416b;">40,000</div>
<div class="a" style="left:1088.6px;width:400px;text-align:right;top:560.2px;font-size:13px;line-height:13px;font-weight:bold;color:#23416b;">30,000</div>
<div class="a" style="left:1162.5px;width:400px;text-align:right;top:560.2px;font-size:13px;line-height:13px;font-weight:bold;color:#23416b;">7,500</div>
<div class="a" style="left:1236.3px;width:400px;text-align:right;top:560.2px;font-size:13px;line-height:13px;font-weight:bold;color:#23416b;">0</div>
<div class="a" style="left:1310.2px;width:400px;text-align:right;top:560.2px;font-size:13px;line-height:13px;font-weight:bold;color:#23416b;">0</div>
<div class="a" style="left:1384.0px;width:400px;text-align:right;top:560.2px;font-size:13px;line-height:13px;font-weight:bold;color:#23416b;">0</div>
<div class="a" style="left:1457.8px;width:400px;text-align:right;top:560.2px;font-size:13px;line-height:13px;font-weight:bold;color:#23416b;"></div>
<div class="a" style="left:567.0px;top:579.8px;font-size:13px;line-height:13px;font-weight:normal;color:#4a6283;letter-spacing:0.15px;">Prior Year Actual All Departments Capital</div>
<div class="a" style="left:793.2px;width:400px;text-align:right;top:579.8px;font-size:13px;line-height:13px;font-weight:bold;color:#23416b;">14,206</div>
<div class="a" style="left:867.0px;width:400px;text-align:right;top:579.8px;font-size:13px;line-height:13px;font-weight:bold;color:#23416b;">14,574</div>
<div class="a" style="left:940.9px;width:400px;text-align:right;top:579.8px;font-size:13px;line-height:13px;font-weight:bold;color:#23416b;">14,786</div>
<div class="a" style="left:1014.8px;width:400px;text-align:right;top:579.8px;font-size:13px;line-height:13px;font-weight:bold;color:#23416b;">12,838</div>
<div class="a" style="left:1088.6px;width:400px;text-align:right;top:579.8px;font-size:13px;line-height:13px;font-weight:bold;color:#23416b;">11,148</div>
<div class="a" style="left:1162.5px;width:400px;text-align:right;top:579.8px;font-size:13px;line-height:13px;font-weight:bold;color:#23416b;">17,884</div>
<div class="a" style="left:1236.3px;width:400px;text-align:right;top:579.8px;font-size:13px;line-height:13px;font-weight:bold;color:#23416b;">16,478</div>
<div class="a" style="left:1310.2px;width:400px;text-align:right;top:579.8px;font-size:13px;line-height:13px;font-weight:bold;color:#23416b;">17,993</div>
<div class="a" style="left:1384.0px;width:400px;text-align:right;top:579.8px;font-size:13px;line-height:13px;font-weight:bold;color:#23416b;">14,194</div>
<div class="a" style="left:1457.8px;width:400px;text-align:right;top:579.8px;font-size:13px;line-height:13px;font-weight:bold;color:#23416b;"></div>
<div class="a" style="left:567.5px;top:600.2px;font-size:13px;line-height:13px;font-weight:normal;color:#4a6283;">% Variance</div>
<div class="a" style="left:793.2px;width:400px;text-align:right;top:600.2px;font-size:13px;line-height:13px;font-weight:normal;color:#4a6283;">-100.0%</div>
<div class="a" style="left:867.0px;width:400px;text-align:right;top:600.2px;font-size:13px;line-height:13px;font-weight:normal;color:#4a6283;">-100.0%</div>
<div class="a" style="left:940.9px;width:400px;text-align:right;top:600.2px;font-size:13px;line-height:13px;font-weight:normal;color:#4a6283;">305.8%</div>
<div class="a" style="left:1014.8px;width:400px;text-align:right;top:600.2px;font-size:13px;line-height:13px;font-weight:normal;color:#4a6283;">211.6%</div>
<div class="a" style="left:1088.6px;width:400px;text-align:right;top:600.2px;font-size:13px;line-height:13px;font-weight:normal;color:#4a6283;">169.1%</div>
<div class="a" style="left:1162.5px;width:400px;text-align:right;top:600.2px;font-size:13px;line-height:13px;font-weight:normal;color:#4a6283;">-58.1%</div>
<div class="a" style="left:1236.3px;width:400px;text-align:right;top:600.2px;font-size:13px;line-height:13px;font-weight:normal;color:#4a6283;">-100.0%</div>
<div class="a" style="left:1310.2px;width:400px;text-align:right;top:600.2px;font-size:13px;line-height:13px;font-weight:normal;color:#4a6283;">-100.0%</div>
<div class="a" style="left:1384.0px;width:400px;text-align:right;top:600.2px;font-size:13px;line-height:13px;font-weight:normal;color:#4a6283;">-100.0%</div>
<div class="a" style="left:1829.0px;top:600.2px;font-size:13px;line-height:13px;font-weight:normal;color:#4a6283;">0.0%</div>
<svg class="a" style="left:1122.7px;top:599.5px" width="16" height="16" viewBox="0 0 16 16"><path d="M8 0.8 L15.2 8 L11 8 L11 15.2 L5 15.2 L5 8 L0.8 8 Z" fill="#39a83a" stroke="#1f7a22" stroke-width="0.8"/><path d="M8 2.5 L12.5 7 L9.5 7 L9.5 14 L6.5 14 L6.5 7 L3.5 7 Z" fill="#5cc95a"/></svg>
<svg class="a" style="left:1196.5px;top:599.5px" width="16" height="16" viewBox="0 0 16 16"><path d="M8 0.8 L15.2 8 L11 8 L11 15.2 L5 15.2 L5 8 L0.8 8 Z" fill="#39a83a" stroke="#1f7a22" stroke-width="0.8"/><path d="M8 2.5 L12.5 7 L9.5 7 L9.5 14 L6.5 14 L6.5 7 L3.5 7 Z" fill="#5cc95a"/></svg>
<svg class="a" style="left:1270.4px;top:599.5px" width="16" height="16" viewBox="0 0 16 16"><path d="M8 15.2 L15.2 8 L11 8 L11 0.8 L5 0.8 L5 8 L0.8 8 Z" fill="#f47a6e" stroke="#d9534a" stroke-width="0.8"/><path d="M8 13.5 L12.5 9 L9.5 9 L9.5 2 L6.5 2 L6.5 9 L3.5 9 Z" fill="#fbb0a6"/></svg>
<svg class="a" style="left:1344.2px;top:599.5px" width="16" height="16" viewBox="0 0 16 16"><path d="M8 15.2 L15.2 8 L11 8 L11 0.8 L5 0.8 L5 8 L0.8 8 Z" fill="#f47a6e" stroke="#d9534a" stroke-width="0.8"/><path d="M8 13.5 L12.5 9 L9.5 9 L9.5 2 L6.5 2 L6.5 9 L3.5 9 Z" fill="#fbb0a6"/></svg>
<svg class="a" style="left:1418.0px;top:599.5px" width="16" height="16" viewBox="0 0 16 16"><path d="M8 15.2 L15.2 8 L11 8 L11 0.8 L5 0.8 L5 8 L0.8 8 Z" fill="#f47a6e" stroke="#d9534a" stroke-width="0.8"/><path d="M8 13.5 L12.5 9 L9.5 9 L9.5 2 L6.5 2 L6.5 9 L3.5 9 Z" fill="#fbb0a6"/></svg>
<svg class="a" style="left:1491.9px;top:599.5px" width="16" height="16" viewBox="0 0 16 16"><path d="M8 0.8 L15.2 8 L11 8 L11 15.2 L5 15.2 L5 8 L0.8 8 Z" fill="#39a83a" stroke="#1f7a22" stroke-width="0.8"/><path d="M8 2.5 L12.5 7 L9.5 7 L9.5 14 L6.5 14 L6.5 7 L3.5 7 Z" fill="#5cc95a"/></svg>
<svg class="a" style="left:1565.8px;top:599.5px" width="16" height="16" viewBox="0 0 16 16"><path d="M8 0.8 L15.2 8 L11 8 L11 15.2 L5 15.2 L5 8 L0.8 8 Z" fill="#39a83a" stroke="#1f7a22" stroke-width="0.8"/><path d="M8 2.5 L12.5 7 L9.5 7 L9.5 14 L6.5 14 L6.5 7 L3.5 7 Z" fill="#5cc95a"/></svg>
<svg class="a" style="left:1639.6px;top:599.5px" width="16" height="16" viewBox="0 0 16 16"><path d="M8 0.8 L15.2 8 L11 8 L11 15.2 L5 15.2 L5 8 L0.8 8 Z" fill="#39a83a" stroke="#1f7a22" stroke-width="0.8"/><path d="M8 2.5 L12.5 7 L9.5 7 L9.5 14 L6.5 14 L6.5 7 L3.5 7 Z" fill="#5cc95a"/></svg>
<svg class="a" style="left:1713.5px;top:599.5px" width="16" height="16" viewBox="0 0 16 16"><path d="M8 0.8 L15.2 8 L11 8 L11 15.2 L5 15.2 L5 8 L0.8 8 Z" fill="#39a83a" stroke="#1f7a22" stroke-width="0.8"/><path d="M8 2.5 L12.5 7 L9.5 7 L9.5 14 L6.5 14 L6.5 7 L3.5 7 Z" fill="#5cc95a"/></svg>
<svg class="a" style="left:1787.3px;top:599.5px" width="16" height="16" viewBox="0 0 16 16"><path d="M15.2 8 L8 0.8 L8 5 L0.8 5 L0.8 11 L8 11 L8 15.2 Z" fill="#f7c34a" stroke="#e0a020" stroke-width="0.8"/><path d="M13.5 8 L9 3.5 L9 6.5 L2 6.5 L2 9.5 L9 9.5 L9 12.5 Z" fill="#fddc7c"/></svg>
</div></div>
<div class="a" style="left:1830px;top:281px;width:1.5px;height:512px;background:#9a9a9a;"></div>
<div class="a" style="left:1831.5px;top:281px;width:22.5px;height:512px;background:#ececec;"></div>
<div class="a" style="left:1834.7px;top:296px;width:16px;height:480px;background:#dadada;"></div>
<div class="a" style="left:1834.7px;top:281.7px;width:16px;height:14.6px;box-sizing:border-box;border:1px solid #8e8e8e;background:#fff;"></div>
<svg class="a" style="left:1838px;top:285px" width="10" height="6" viewBox="0 0 10 6"><path d="M1 5.5 L5 1 L9 5.5 Z" fill="#6a6a6a"/></svg>
<div class="a" style="left:1834.7px;top:297px;width:16px;height:214px;box-sizing:border-box;border:1px solid #8e8e8e;border-top-width:1.5px;background:#fff;"></div>
<div class="a" style="left:1834.7px;top:776px;width:16px;height:15px;box-sizing:border-box;border:1px solid #8e8e8e;background:#fff;"></div>
<svg class="a" style="left:1838px;top:781px" width="10" height="6" viewBox="0 0 10 6"><path d="M1 0.5 L5 5 L9 0.5 Z" fill="#6a6a6a"/></svg>
<div class="a" style="left:268px;top:792.5px;width:1562px;height:1.5px;background:#9a9a9a;"></div>
<div class="a" style="left:268px;top:794px;width:1586px;height:28px;background:#e6e6e6;"></div>
<div class="a" style="left:378px;top:793px;width:77px;height:27px;background:#fff;border-left:1px solid #aaa;border-right:1px solid #aaa;box-sizing:border-box;"></div>
<div class="a" style="left:378px;top:817px;width:77px;height:3px;background:#217346;"></div>
<div class="a" style="left:392.5px;top:799.4px;font-size:14.2px;line-height:14.2px;font-weight:bold;color:#217346;">Capital</div>
<svg class="a" style="left:297px;top:804px" width="6" height="9" viewBox="0 0 6 9"><path d="M5 0.5 L0.8 4.5 L5 8.5 Z" fill="#c4c4c4"/></svg>
<svg class="a" style="left:328px;top:804px" width="6" height="9" viewBox="0 0 6 9"><path d="M1 0.5 L5.2 4.5 L1 8.5 Z" fill="#c4c4c4"/></svg>
<div class="a" style="left:1188px;top:801px;width:2px;height:2px;background:#bbb;box-shadow:0 5px 0 #bbb,0 10px 0 #bbb;"></div>
<div class="a" style="left:1206px;top:800px;width:623px;height:16px;background:#dcdcdc;"></div>
<div class="a" style="left:1205.8px;top:800px;width:16px;height:16px;box-sizing:border-box;border:1px solid #8e8e8e;background:#fff;"></div>
<svg class="a" style="left:1210px;top:804px" width="6" height="9" viewBox="0 0 6 9"><path d="M5 0.5 L0.8 4.5 L5 8.5 Z" fill="#555"/></svg>
<div class="a" style="left:1221.5px;top:800px;width:216.5px;height:16px;box-sizing:border-box;border:1px solid #8e8e8e;background:#fff;"></div>
<div class="a" style="left:1813.3px;top:800px;width:16px;height:16px;box-sizing:border-box;border:1px solid #8e8e8e;background:#fff;"></div>
<svg class="a" style="left:1818px;top:804px" width="6" height="9" viewBox="0 0 6 9"><path d="M1 0.5 L5.2 4.5 L1 8.5 Z" fill="#555"/></svg>
</div></div>
</body></html>
